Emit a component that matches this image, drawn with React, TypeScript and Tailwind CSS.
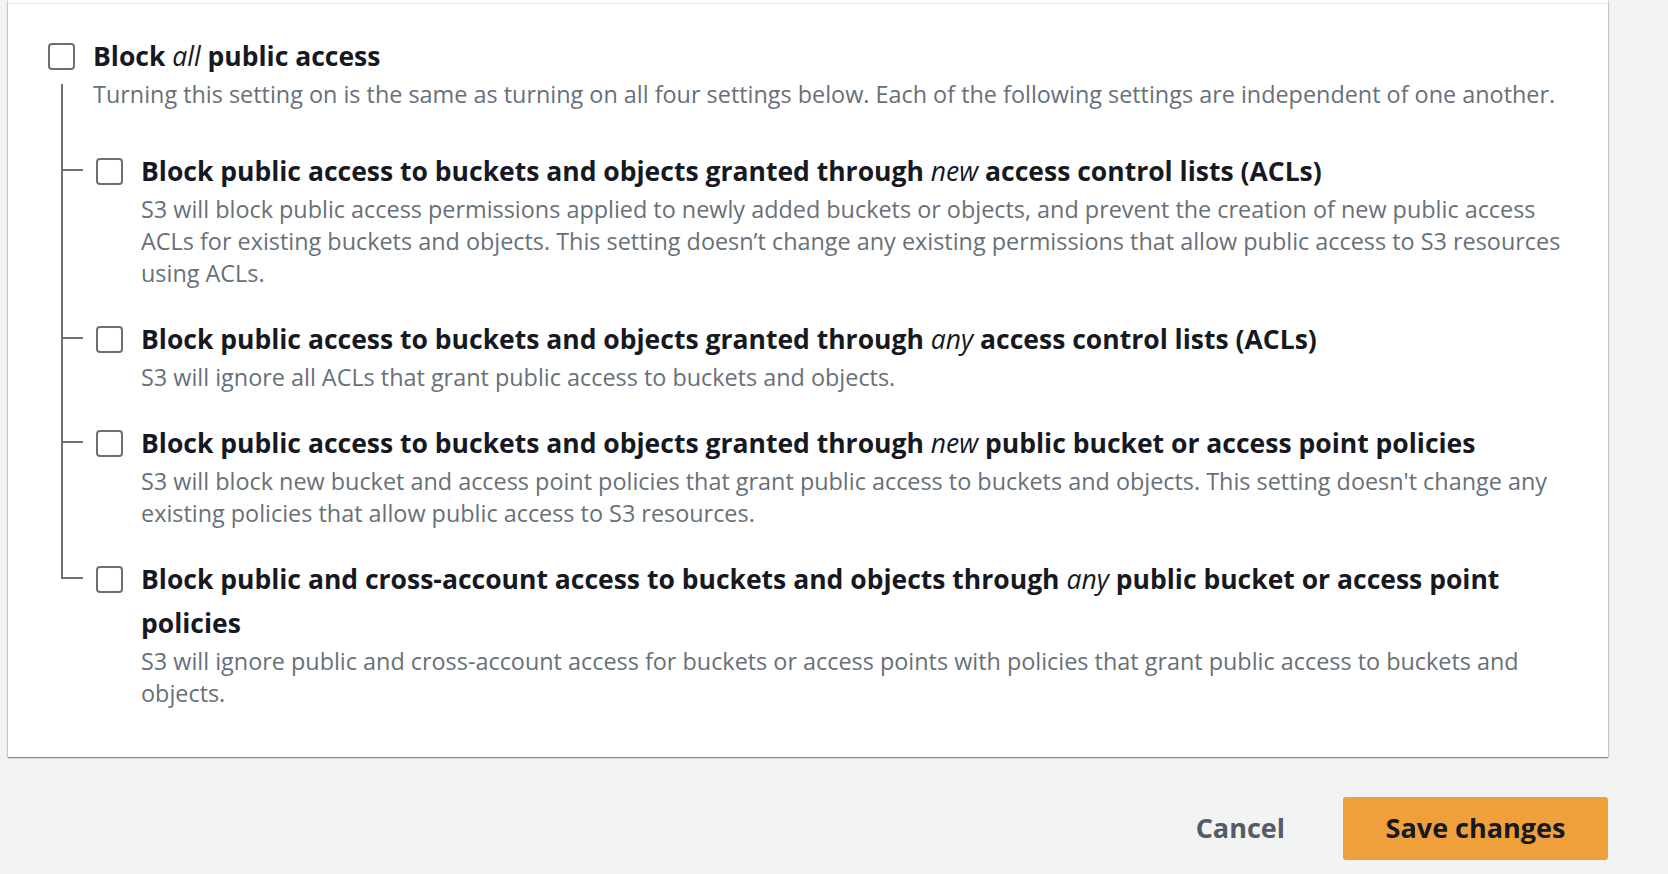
import React from "react";

const font = { fontFamily: "'Open Sans', 'Noto Sans', sans-serif" };

function Box() {
  return (
    <div className="w-[27px] h-[27px] shrink-0 rounded-[4px] border-2 border-[#687078] bg-white" />
  );
}

type Item = { title: React.ReactNode; desc: string };

const items: Item[] = [
  {
    title: (
      <>
        Block public access to buckets and objects granted through <i className="font-normal">new</i> access control lists (ACLs)
      </>
    ),
    desc:
      "S3 will block public access permissions applied to newly added buckets or objects, and prevent the creation of new public access ACLs for existing buckets and objects. This setting doesn’t change any existing permissions that allow public access to S3 resources using ACLs.",
  },
  {
    title: (
      <>
        Block public access to buckets and objects granted through <i className="font-normal">any</i> access control lists (ACLs)
      </>
    ),
    desc: "S3 will ignore all ACLs that grant public access to buckets and objects.",
  },
  {
    title: (
      <>
        Block public access to buckets and objects granted through <i className="font-normal">new</i> public bucket or access point policies
      </>
    ),
    desc:
      "S3 will block new bucket and access point policies that grant public access to buckets and objects. This setting doesn't change any existing policies that allow public access to S3 resources.",
  },
  {
    title: (
      <>
        Block public and cross-account access to buckets and objects through <i className="font-normal">any</i> public bucket or access point policies
      </>
    ),
    desc:
      "S3 will ignore public and cross-account access for buckets or access points with policies that grant public access to buckets and objects.",
  },
];

export default function App() {
  return (
    <div className="w-[1668px] h-[874px] overflow-hidden bg-[#f2f3f3]" style={font}>
      <div className="ml-[8px] w-[1600px] bg-white shadow-[0_1px_1px_0_rgba(0,28,36,0.3),1px_1px_1px_0_rgba(0,28,36,0.15),-1px_1px_1px_0_rgba(0,28,36,0.15)]">
        <div className="h-[3px]" />
        <div className="border-t border-[#eaeded] pl-[40px] pr-[40px] pt-[30px] pb-[20px]">
          {/* main */}
          <div className="flex items-center gap-[18px] h-[44px]">
            <Box />
            <div className="text-[26.5px] leading-[44px] font-bold text-[#16191f]">
              Block <i className="font-normal">all</i> public access
            </div>
          </div>
          <div className="flex">
            <div className="w-[27px] shrink-0 flex justify-center">
              <div className="w-[2px] mt-[6px] bg-[#687078]" />
            </div>
            <div className="pl-[18px] pt-0 pb-[39px] text-[23.4px] leading-[32px] text-[#687078] whitespace-nowrap">
              Turning this setting on is the same as turning on all four settings below. Each of the following settings are independent of one another.
            </div>
          </div>
          {items.map((it, i) => {
            const last = i === items.length - 1;
            return (
              <div key={i} className="flex">
                <div className="w-[14px] shrink-0 flex flex-col">
                  <div className="h-[22px] ml-[13px] w-[22px] border-l-2 border-b-2 border-[#687078]" />
                  {!last && <div className="flex-1 ml-[13px] border-l-2 border-[#687078]" />}
                </div>
                <div className="ml-[34px] flex gap-[18px] pb-[28px]">
                  <div className="h-[44px] flex items-center">
                    <Box />
                  </div>
                  <div>
                    <div className="text-[26.5px] leading-[44px] font-bold text-[#16191f]">{it.title}</div>
                    <div className="text-[23.4px] leading-[32px] text-[#687078]">{it.desc}</div>
                  </div>
                </div>
              </div>
            );
          })}
        </div>
      </div>
      <div className="flex justify-end items-center pr-[60px] pt-[40px] gap-[58px]">
        <button className="text-[27px] font-bold text-[#545b64]">Cancel</button>
        <button className="w-[265px] h-[63px] rounded-[3px] bg-[#f0a03a] text-[27px] font-bold text-[#16191f]">
          Save changes
        </button>
      </div>
    </div>
  );
}
